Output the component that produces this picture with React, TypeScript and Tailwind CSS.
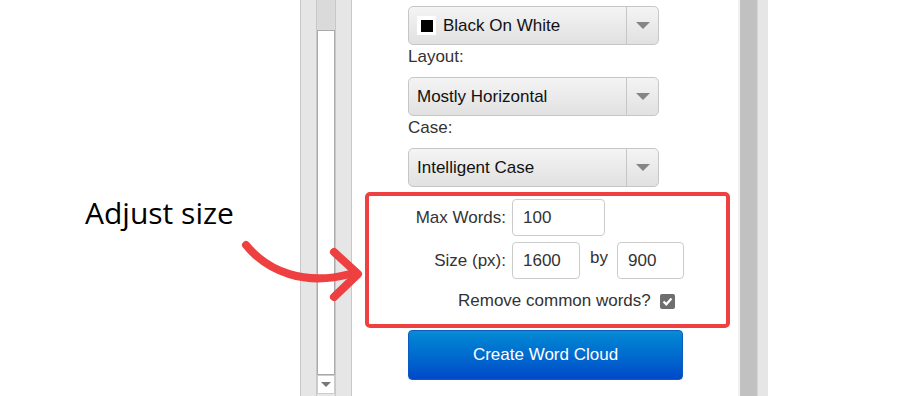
import React from "react";

// セレクトボックス（見た目だけ）
function Select({ children }: { children: React.ReactNode }) {
  return (
    <div className="flex h-[39px] rounded-[5px] border border-[#c6c6c6] bg-linear-to-b from-[#f4f4f4] to-[#e1e1e1]">
      <div className="flex flex-1 items-center pl-[8px] text-[#111]">{children}</div>
      <div className="flex w-[32px] items-center justify-center border-l border-[#c6c6c6]">
        <span className="h-0 w-0 border-x-[7px] border-t-[7px] border-x-transparent border-t-[#858585]" />
      </div>
    </div>
  );
}

function Label({ children }: { children: React.ReactNode }) {
  return <div className="h-[32px] pt-[1px] leading-[22px] text-[#333]">{children}</div>;
}

function Field({ value, w }: { value: string; w: string }) {
  return (
    <input
      readOnly
      value={value}
      className={`h-[37px] rounded-[4px] border border-[#cccccc] bg-white pl-[10px] text-[17px] text-[#333] outline-none ${w}`}
    />
  );
}

export default function App() {
  return (
    <div className="relative flex h-[396px] w-[900px] overflow-hidden bg-white font-['Liberation_Sans',Arial,sans-serif] text-[17px] text-[#333]">
      {/* 注釈テキスト */}
      <div className="w-[300px] shrink-0">
        <p className="mt-[195px] pl-[85px] font-['Open_Sans',sans-serif] text-[30px] leading-[36px] text-black">
          Adjust size
        </p>
      </div>

      {/* スクロールバー列 */}
      <div className="flex w-[52px] shrink-0 border-x border-[#c8c8c8] bg-[#e6e6e6]">
        <div className="w-[16px] border-r border-[#c8c8c8]" />
        <div className="flex w-[18px] flex-col">
          <div className="h-[30px] bg-[#dadada]" />
          <div className="flex-1 border border-[#aaaaaa] bg-white" />
          <div className="flex h-[19px] items-center justify-center border border-[#cccccc] bg-white">
            <span className="h-0 w-0 border-x-[5px] border-t-[5px] border-x-transparent border-t-[#777]" />
          </div>
          <div className="h-[2px]" />
        </div>
        <div className="flex-1 border-l border-[#c8c8c8]" />
      </div>

      {/* フォーム */}
      <div className="w-[386px] shrink-0">
        <div className="ml-[56px] w-[251px] pt-[6px]">
          <Select>
            <span className="mr-[7px] flex h-[19px] w-[19px] items-center justify-center bg-white">
              <span className="h-[12px] w-[12px] bg-black" />
            </span>
            Black On White
          </Select>
          <Label>Layout:</Label>
          <Select>Mostly Horizontal</Select>
          <Label>Case:</Label>
          <Select>Intelligent Case</Select>
        </div>

        <div className="ml-[13px] mt-[5px] w-[365px] rounded-[5px] border-4 border-[#ee4040] pb-[12px] pt-[3px]">
          <div className="flex h-[37px] items-center">
            <span className="w-[143px] shrink-0 pr-[6px] text-right">Max Words:</span>
            <Field value="100" w="w-[93px]" />
          </div>
          <div className="mt-[6px] flex h-[37px] items-center">
            <span className="w-[143px] shrink-0 pr-[6px] text-right">Size (px):</span>
            <Field value="1600" w="w-[68px]" />
            <span className="ml-[10px] mr-[9px] -mt-[6px]">by</span>
            <Field value="900" w="w-[67px]" />
          </div>
          <div className="mt-[11px] flex h-[22px] items-center pl-[89px]">
            <span>Remove common words?</span>
            <svg width="15" height="15" viewBox="0 0 15 15" className="ml-[9px]">
              <rect x="0" y="0" width="15" height="15" rx="2" fill="#6e6e6e" />
              <path d="M3.5 7.5 L6.3 10.3 L11.5 4.5" fill="none" stroke="#fff" strokeWidth="2.2" />
            </svg>
          </div>
        </div>

        <button className="ml-[56px] mt-[2px] flex h-[50px] w-[275px] items-center justify-center rounded-[4px] border border-[#0a5cc0] bg-linear-to-b from-[#0b8ad4] to-[#0049c8] text-[17px] text-white">
          Create Word Cloud
        </button>
      </div>

      {/* 右側のスクロールバー */}
      <div className="w-[2px] shrink-0 bg-[#f2f2f2]" />
      <div className="w-[18px] shrink-0 border-r border-[#d6d6d6] bg-[#c1c1c1]" />
      <div className="w-[10px] shrink-0 bg-[#e6e6e6]" />
      <div className="flex-1" />

      {/* 矢印 */}
      <svg className="pointer-events-none absolute inset-0" width="900" height="396" viewBox="0 0 900 396">
        <g fill="none" stroke="#ee4040" strokeWidth="8" strokeLinecap="round" strokeLinejoin="round">
          <path d="M246 245 C268 272 305 286 350 274" />
          <path d="M334 252 L358 274 L334 297" />
        </g>
      </svg>
    </div>
  );
}
